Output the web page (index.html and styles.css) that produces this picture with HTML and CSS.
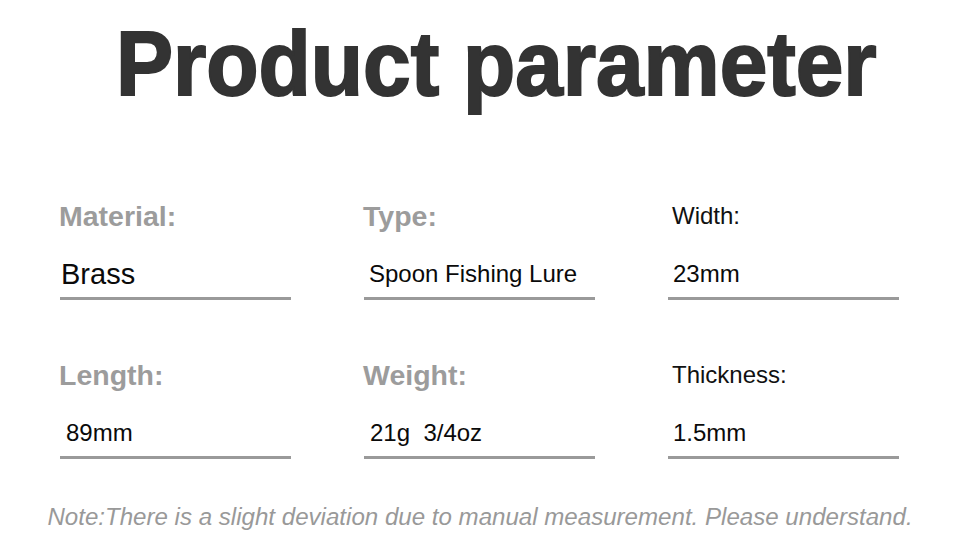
FILE: index.html
```html
<!DOCTYPE html>
<html lang="en">
<head>
<meta charset="utf-8">
<title>Product parameter</title>
<link rel="stylesheet" href="styles.css">
</head>
<body>
<main class="page">
  <h1 class="title">Product parameter</h1>
  <section class="params">
    <div class="cell">
      <div class="label label-muted">Material:</div>
      <div class="value value-lg">Brass</div>
    </div>
    <div class="cell">
      <div class="label label-muted">Type:</div>
      <div class="value">Spoon Fishing Lure</div>
    </div>
    <div class="cell">
      <div class="label label-plain">Width:</div>
      <div class="value">23mm</div>
    </div>
    <div class="cell">
      <div class="label label-muted">Length:</div>
      <div class="value value-wide">89mm</div>
    </div>
    <div class="cell">
      <div class="label label-muted">Weight:</div>
      <div class="value value-wide">21g&nbsp; 3/4oz</div>
    </div>
    <div class="cell">
      <div class="label label-plain">Thickness:</div>
      <div class="value">1.5mm</div>
    </div>
  </section>
  <p class="note">Note:There is a slight deviation due to manual measurement. Please understand.</p>
</main>
</body>
</html>
```
FILE: styles.css
```css
* { box-sizing: border-box; }
html, body { margin: 0; padding: 0; background: #ffffff; }
body { width: 960px; height: 560px; overflow: hidden; font-family: "Liberation Sans", Arial, sans-serif; }

.page { display: flex; flex-direction: column; align-items: flex-start; }

.title {
  margin: 18px 0 0 116px;
  font-size: 91px;
  line-height: 91px;
  font-weight: 700;
  letter-spacing: 0;
  white-space: nowrap;
  color: #333333;
  -webkit-text-stroke: 2px #333333;
  transform: scaleX(0.94);
  transform-origin: left center;
}

.params {
  margin-top: 87px;
  padding-left: 60px;
  display: grid;
  grid-template-columns: 231px 231px 231px;
  column-gap: 73px;
  row-gap: 55px;
}

.cell {
  border-bottom: 3px solid #9a9a9a;
}

.label {
  height: 40px;
  line-height: 40px;
  white-space: nowrap;
}
.label-muted {
  font-size: 28.5px;
  font-weight: 700;
  color: #9c9c9c;
  margin-left: -1px;
}
.label-plain {
  font-size: 24px;
  color: #111111;
  padding-left: 4px;
}

.value {
  padding: 18px 0 3px 5px;
  line-height: 40px;
  font-size: 24px;
  color: #0a0a0a;
  white-space: nowrap;
}
.value-lg { font-size: 29px; padding-left: 1px; }
.value-wide { padding-left: 6px; }

.note {
  align-self: stretch;
  margin: 43px 0 0;
  text-align: center;
  font-size: 24.1px;
  line-height: 30px;
  font-style: italic;
  color: #999999;
  white-space: nowrap;
}
```
